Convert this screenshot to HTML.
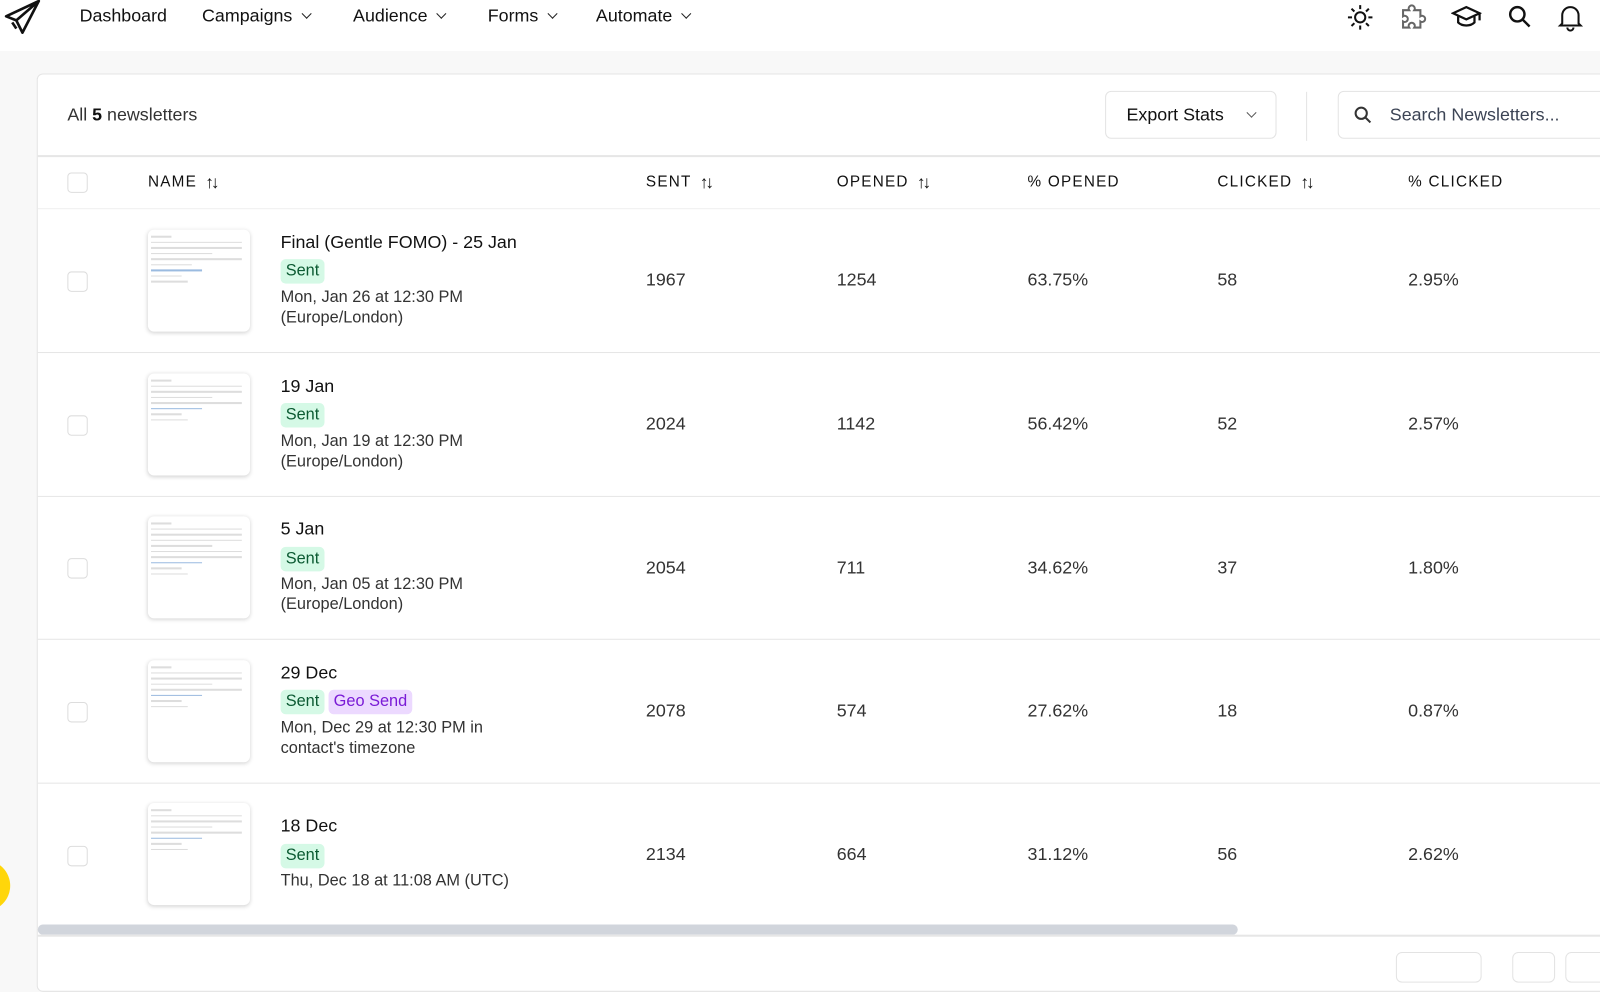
<!DOCTYPE html>
<html><head><meta charset="utf-8"><style>
*{box-sizing:border-box;margin:0;padding:0}
html,body{width:1600px;height:962px;overflow:hidden;background:#f8f8f8}
#w{position:absolute;left:0;top:0;width:1568px;height:943px;transform:scale(1.0204);transform-origin:0 0;font-family:"Liberation Sans",sans-serif;color:#111}
.top{position:absolute;left:0;top:0;width:1600px;height:50px;background:#fff}
.nav{position:absolute;top:5px;font-size:17.5px;color:#111}
.chev{display:inline-block;width:7px;height:7px;border-right:1.8px solid #222;border-bottom:1.8px solid #222;transform:rotate(45deg);margin-left:10px;position:relative;top:-4px}
.card{position:absolute;left:36px;top:72px;width:1600px;height:900px;background:#fff;border:1px solid #e4e4e4;border-radius:6px}
.a{position:absolute}
.hd{font-size:15px;letter-spacing:1.2px;color:#111;top:169px;line-height:20px;height:20px}
.cb{position:absolute;left:66px;width:20px;height:20px;border:1.5px solid #ddd;border-radius:4px}
.row{position:absolute;left:37px;width:1563px;height:141px;border-bottom:1.5px solid #e6e6e6}
.th{position:absolute;left:145px;width:100px;height:100px;background:#fff;border-radius:6px;box-shadow:0 1px 4px rgba(0,0,0,.18);overflow:hidden}
.th i{display:block;height:1.5px;background:#ddd;margin:4px 8px 0 3px}
.th i.b{background:#9bbbe0;width:50px}
.title{position:absolute;left:275px;font-size:17.5px}
.badge{position:absolute;font-size:16px;padding:3px 5px;border-radius:5px;background:#d5f9e6;color:#0b5a32}
.geo{background:#ecd9ff;color:#7a1bd6}
.date{position:absolute;left:275px;font-size:16px;color:#333;line-height:20px}
.n{position:absolute;font-size:17.5px;color:#333}
.sort{font-size:17px;margin-left:8px;letter-spacing:-3px;font-weight:bold;line-height:20px;vertical-align:top}
</style></head><body><div id="w">
<div class="top"></div>
<svg class="a" style="left:4px;top:0" width="36" height="34" viewBox="0 0 36 34"><path d="M34 1 L2 16 L12 20 L18 32 Z M12 20 L34 1" fill="none" stroke="#111" stroke-width="2.6" stroke-linejoin="round"/><path d="M8 22 L12 28" stroke="#111" stroke-width="2.6"/></svg>
<div class="nav" style="left:78px">Dashboard</div>
<div class="nav" style="left:198px">Campaigns<span class="chev"></span></div>
<div class="nav" style="left:346px">Audience<span class="chev"></span></div>
<div class="nav" style="left:478px">Forms<span class="chev"></span></div>
<div class="nav" style="left:584px">Automate<span class="chev"></span></div>
<svg class="a" style="left:1319px;top:3px" width="28" height="28" viewBox="0 0 28 28" fill="none" stroke="#111" stroke-width="2"><circle cx="14" cy="14" r="5"/><path d="M14 2v4M14 22v4M2 14h4M22 14h4M5.5 5.5l2.8 2.8M19.7 19.7l2.8 2.8M5.5 22.5l2.8-2.8M19.7 8.3l2.8-2.8"/></svg>
<svg class="a" style="left:1371px;top:2px" width="28" height="28" viewBox="0 0 28 28" fill="none" stroke="#666" stroke-width="2"><path d="M4 8h6a3 3 0 1 1 5 0h6v6a3 3 0 1 1 0 5v6h-6a3 3 0 1 0-5 0H4v-6a3 3 0 1 0 0-5z"/></svg>
<svg class="a" style="left:1422px;top:4px" width="30" height="26" viewBox="0 0 30 26" fill="none" stroke="#111" stroke-width="2.2"><path d="M2 9l13-6 13 6-13 6z"/><path d="M7 12v6c4 4 12 4 16 0v-6M28 9v7"/></svg>
<svg class="a" style="left:1477px;top:4px" width="26" height="26" viewBox="0 0 26 26" fill="none" stroke="#111" stroke-width="2.4"><circle cx="10" cy="10" r="7"/><path d="M15 15l7 7"/></svg>
<svg class="a" style="left:1526px;top:3px" width="26" height="28" viewBox="0 0 26 28" fill="none" stroke="#111" stroke-width="2"><path d="M5 20V12a8 8 0 0 1 16 0v8l2 2H3z"/><path d="M10 24a3 3 0 0 0 6 0"/></svg>
<div class="card"></div>
<div class="a" style="left:66px;top:102px;font-size:17.5px;color:#333">All <b style="color:#111">5</b> newsletters</div>
<div class="a" style="left:1083px;top:89px;width:168px;height:47px;border:1.5px solid #e3e3e3;border-radius:6px;font-size:17.5px;padding:12px 0 0 20px">Export Stats<span class="chev" style="margin-left:24px;border-color:#555"></span></div>
<div class="a" style="left:1280px;top:90px;width:1px;height:48px;background:#e3e3e3"></div>
<div class="a" style="left:1311px;top:89px;width:300px;height:47px;border:1.5px solid #e3e3e3;border-radius:6px;font-size:17.5px;color:#3c4455;padding:12px 0 0 50px">Search Newsletters...</div>
<svg class="a" style="left:1326px;top:103px" width="20" height="20" viewBox="0 0 20 20" fill="none" stroke="#333" stroke-width="2"><circle cx="8" cy="8" r="5.5"/><path d="M12 12l5 5"/></svg>
<div class="a" style="left:37px;top:152px;width:1563px;height:1.5px;background:#e6e6e6"></div>
<div class="cb" style="top:169px"></div>
<div class="a hd" style="left:145px">NAME<span class="sort">↑↓</span></div>
<div class="a hd" style="left:633px">SENT<span class="sort">↑↓</span></div>
<div class="a hd" style="left:820px">OPENED<span class="sort">↑↓</span></div>
<div class="a hd" style="left:1007px">% OPENED</div>
<div class="a hd" style="left:1193px">CLICKED<span class="sort">↑↓</span></div>
<div class="a hd" style="left:1380px">% CLICKED</div>
<div class="a" style="left:37px;top:204px;width:1563px;height:1px;background:#f0f0f0"></div>

<div class="row" style="top:205px"></div>
<div class="row" style="top:345.5px"></div>
<div class="row" style="top:486px"></div>
<div class="row" style="top:626.5px"></div>

<div class="cb" style="top:266px"></div>
<div class="th" style="top:225px"><i style="width:20px;margin-top:6px"></i><i></i><i></i><i style="width:60px"></i><i></i><i style="width:40px"></i><i class="b"></i><i style="width:30px"></i><i style="width:36px"></i></div>
<div class="title" style="top:227px">Final (Gentle FOMO) - 25 Jan</div>
<div class="badge" style="left:275px;top:254px">Sent</div>
<div class="date" style="top:282px">Mon, Jan 26 at 12:30 PM<br>(Europe/London)</div>
<div class="n" style="left:633px;top:264px">1967</div><div class="n" style="left:820px;top:264px">1254</div><div class="n" style="left:1007px;top:264px">63.75%</div><div class="n" style="left:1193px;top:264px">58</div><div class="n" style="left:1380px;top:264px">2.95%</div>

<div class="cb" style="top:407px"></div>
<div class="th" style="top:366px"><i style="width:20px;margin-top:6px"></i><i></i><i></i><i style="width:60px"></i><i></i><i class="b"></i><i style="width:30px"></i><i style="width:36px"></i></div>
<div class="title" style="top:368px">19 Jan</div>
<div class="badge" style="left:275px;top:395px">Sent</div>
<div class="date" style="top:423px">Mon, Jan 19 at 12:30 PM<br>(Europe/London)</div>
<div class="n" style="left:633px;top:405px">2024</div><div class="n" style="left:820px;top:405px">1142</div><div class="n" style="left:1007px;top:405px">56.42%</div><div class="n" style="left:1193px;top:405px">52</div><div class="n" style="left:1380px;top:405px">2.57%</div>

<div class="cb" style="top:547px"></div>
<div class="th" style="top:506px"><i style="width:20px;margin-top:6px"></i><i></i><i></i><i></i><i style="width:60px"></i><i></i><i></i><i class="b"></i><i style="width:30px"></i><i style="width:36px"></i></div>
<div class="title" style="top:508px">5 Jan</div>
<div class="badge" style="left:275px;top:536px">Sent</div>
<div class="date" style="top:563px">Mon, Jan 05 at 12:30 PM<br>(Europe/London)</div>
<div class="n" style="left:633px;top:546px">2054</div><div class="n" style="left:820px;top:546px">711</div><div class="n" style="left:1007px;top:546px">34.62%</div><div class="n" style="left:1193px;top:546px">37</div><div class="n" style="left:1380px;top:546px">1.80%</div>

<div class="cb" style="top:688px"></div>
<div class="th" style="top:647px"><i style="width:20px;margin-top:6px"></i><i></i><i></i><i style="width:60px"></i><i></i><i class="b"></i><i style="width:30px"></i><i style="width:36px"></i></div>
<div class="title" style="top:649px">29 Dec</div>
<div class="badge" style="left:275px;top:676px">Sent</div>
<div class="badge geo" style="left:322px;top:676px">Geo Send</div>
<div class="date" style="top:704px">Mon, Dec 29 at 12:30 PM in<br>contact's timezone</div>
<div class="n" style="left:633px;top:686px">2078</div><div class="n" style="left:820px;top:686px">574</div><div class="n" style="left:1007px;top:686px">27.62%</div><div class="n" style="left:1193px;top:686px">18</div><div class="n" style="left:1380px;top:686px">0.87%</div>

<div class="cb" style="top:829px"></div>
<div class="th" style="top:787px"><i style="width:20px;margin-top:6px"></i><i></i><i></i><i style="width:60px"></i><i></i><i class="b"></i><i style="width:30px"></i><i style="width:36px"></i></div>
<div class="title" style="top:799px">18 Dec</div>
<div class="badge" style="left:275px;top:827px">Sent</div>
<div class="date" style="top:854px">Thu, Dec 18 at 11:08 AM (UTC)</div>
<div class="n" style="left:633px;top:827px">2134</div><div class="n" style="left:820px;top:827px">664</div><div class="n" style="left:1007px;top:827px">31.12%</div><div class="n" style="left:1193px;top:827px">56</div><div class="n" style="left:1380px;top:827px">2.62%</div>

<div class="a" style="left:37px;top:906px;width:1176px;height:10px;background:#d1d5dc;border-radius:5px"></div>
<div class="a" style="left:37px;top:916px;width:1563px;height:1.5px;background:#e6e6e6"></div>
<div class="a" style="left:1368px;top:933px;width:84px;height:30px;border:1.5px solid #e3e3e3;border-radius:6px"></div>
<div class="a" style="left:1482px;top:933px;width:42px;height:30px;border:1.5px solid #e3e3e3;border-radius:6px"></div>
<div class="a" style="left:1534px;top:933px;width:60px;height:30px;border:1.5px solid #e3e3e3;border-radius:6px"></div>
<div class="a" style="left:-40px;top:843px;width:50px;height:50px;border-radius:50%;background:#ffd60a"></div>
</div></body></html>
